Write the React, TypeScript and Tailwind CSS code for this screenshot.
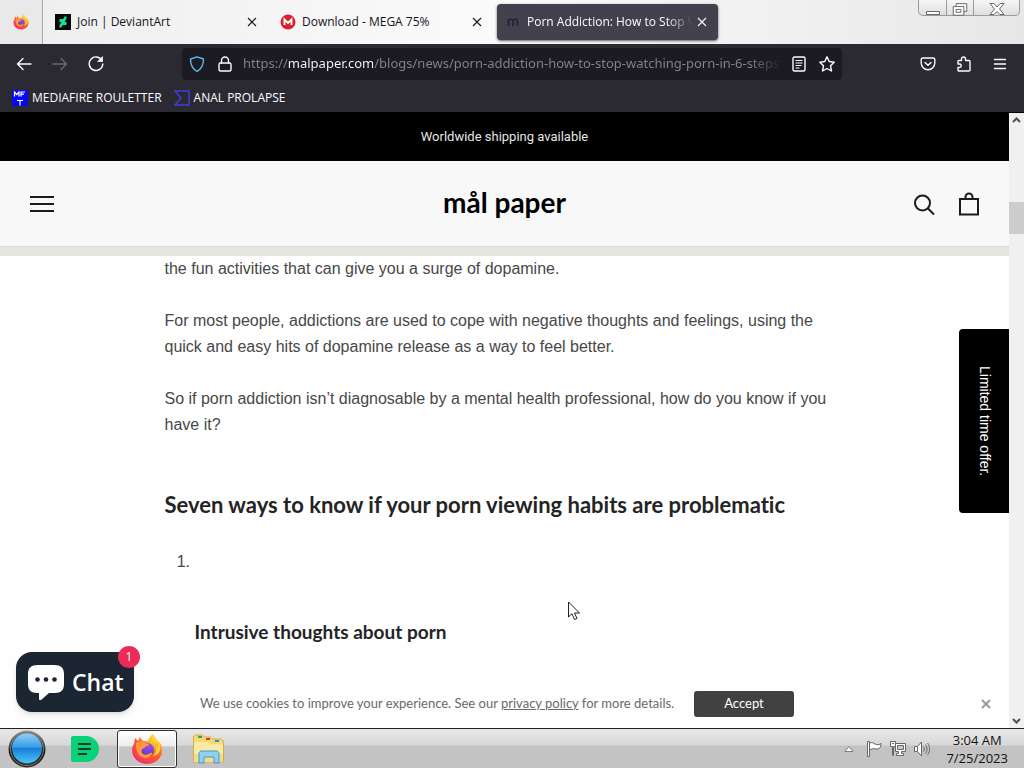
import { useId } from "react";
import type { ReactNode } from "react";

function FirefoxLogo({ className }: { className: string }) {
  const id = useId();
  return (
    <svg viewBox="0 0 32 32" className={className} aria-hidden="true">
      <defs>
        <radialGradient id={`${id}-f`} cx="0.8" cy="0.1" r="1">
          <stop offset="0" stopColor="#fff04a" />
          <stop offset="0.35" stopColor="#ffa11e" />
          <stop offset="0.65" stopColor="#ff5a2b" />
          <stop offset="1" stopColor="#f0306a" />
        </radialGradient>
        <radialGradient id={`${id}-g`} cx="0.6" cy="0.2" r="0.9">
          <stop offset="0" stopColor="#a050ee" />
          <stop offset="1" stopColor="#4a35b8" />
        </radialGradient>
      </defs>
      <path
        fill={`url(#${id}-f)`}
        d="M3 11 4 5l3 3 2-4c1 2 2 3 3.500 4C14 8 16 8 17 8c1-3 2-5 5-7 0 3 2 4 4 7l1 2c0-1 0-2-.5-3C30 10 31.500 14 31 18.500 30.300 26 24 31 16 31S1 25 1 17c0-2.500.8-4.500 2-6Z"
      />
      <circle cx="16" cy="17" r="7" fill={`url(#${id}-g)`} />
      <path fill="#ff9640" d="M5 10c3-2 7-1.500 9 0l4 1c0 1.500-2 2-3.500 2.500-.8.3-1 1.500-1 1.500s-3 .5-3 3 2.500 4 5 3.600c3-.5 4-2.600 6-1.600-1.500 4-6 6-10 4.500C6.500 22.500 5 17 5 10Z" />
      <path fill="#ffd23c" d="M22 1c-1 5 6 7 5.500 14.500C27 14 26 13 25 12.500c1.500 6-1 9-3 10.500 6-1 8-6 7-11-1-4-5-6-7-11Z" />
    </svg>
  );
}

function CloseIcon({ className }: { className: string }) {
  return (
    <svg viewBox="0 0 10 10" className={className} fill="none" stroke="currentColor" strokeWidth="1.100" aria-hidden="true">
      <path d="m1 1 8 8M9 1 1 9" />
    </svg>
  );
}

function LineIcon({ children, className = "size-4" }: { children: ReactNode; className?: string }) {
  return (
    <svg
      viewBox="0 0 16 16"
      className={className}
      fill="none"
      stroke="currentColor"
      strokeWidth="1.400"
      strokeLinecap="round"
      strokeLinejoin="round"
      aria-hidden="true"
    >
      {children}
    </svg>
  );
}

function TabStrip() {
  return (
    <div className="flex h-11 shrink-0 bg-linear-to-r from-[#eeeeee] via-[#fbfbfb] to-[#e6e7e6] text-[12px] text-[#15141a]">
      <button aria-label="Firefox View" className="flex w-[43px] shrink-0 items-center justify-center border-r border-[#aaaaaa] bg-[#e9e9e9]">
        <FirefoxLogo className="size-4" />
      </button>
      <div className="flex w-[225px] shrink-0 items-center pr-1.5 pl-3">
        <svg viewBox="0 0 16 16" className="mr-1.5 size-4" aria-hidden="true">
          <path fill="#07090c" d="M0 0h16v16H0z" />
          <path fill="#12e58b" d="M11.500 2.500v2L9.600 8h1.900v3H8l-.7.500L6.400 13.500H4.500v-2L6.400 8H4.500V5H8l.6-.5.9-2Z" />
        </svg>
        <span className="flex-1">Join | DeviantArt</span>
        <button aria-label="Close Join tab" className="flex size-5 items-center justify-center">
          <CloseIcon className="size-2.5" />
        </button>
      </div>
      <div className="flex w-[225px] shrink-0 items-center pr-1.5 pl-3">
        <svg viewBox="0 0 16 16" className="mr-1.5 size-4" aria-hidden="true">
          <circle cx="8" cy="8" r="7.500" fill="#d9222e" />
          <path d="M4.500 11V5.500L8 9l3.500-3.500V11" fill="none" stroke="#fff" strokeWidth="1.900" />
        </svg>
        <span className="flex-1">Download - MEGA 75%</span>
        <button aria-label="Close Download tab" className="flex size-5 items-center justify-center">
          <CloseIcon className="size-2.5" />
        </button>
      </div>
      <div className="my-1 ml-1 flex w-[221px] shrink-0 items-center rounded-[4px] bg-[#42414d] pr-1.5 pl-2 text-[#fbfbfe] shadow-sm shadow-black/50">
        <svg viewBox="0 0 16 16" className="mr-1.5 size-4 shrink-0" aria-hidden="true">
          <path d="M3.500 12V5m0 2.500C4 5 8 4 8 7.500V12m0-4.500C8.500 4 12.500 4.500 12.500 7.500V12" fill="none" stroke="#24233a" strokeWidth="1.700" />
        </svg>
        <span className="min-w-0 flex-1 overflow-hidden [mask-image:linear-gradient(to_right,black_85%,transparent)] whitespace-nowrap">
          Porn Addiction: How to Stop W
        </span>
        <button aria-label="Close Porn Addiction tab" className="flex size-5 shrink-0 items-center justify-center">
          <CloseIcon className="size-2.5" />
        </button>
      </div>
      <div className="flex flex-1 items-start justify-end">
        <div className="mr-1 flex h-4 rounded-b-[5px] border border-t-0 border-[#9b9b9f] bg-linear-to-b from-[#f6f6f6] to-[#dfdfe2] text-[#66666b]">
          <button aria-label="Minimize" className="flex w-7 justify-center border-r border-[#9b9b9f]">
            <svg viewBox="0 0 27 16" className="h-4 w-[27px]" aria-hidden="true">
              <path fill="#fff" stroke="currentColor" d="M7.500 11.500h13v3h-13z" />
            </svg>
          </button>
          <button aria-label="Restore" className="flex w-[27px] justify-center border-r border-[#9b9b9f]">
            <svg viewBox="0 0 27 16" className="h-4 w-[26px]" aria-hidden="true">
              <path fill="#fff" stroke="currentColor" d="M9.500 3.500h11v8h-11z" />
              <path fill="#fff" stroke="currentColor" d="M6.500 6.500h11v9h-11z" />
              <path fill="none" stroke="currentColor" d="M9.500 9.500h5v3h-5z" />
            </svg>
          </button>
          <button aria-label="Close window" className="flex w-[45px] justify-center">
            <svg viewBox="0 0 16 16" className="size-4" aria-hidden="true">
              <path fill="#fff" stroke="currentColor" strokeLinejoin="round" d="M1 3.500h4L8 7l3-3.500h4L10.500 9l4.500 5.500h-4l-3-3-3 3H1L5.500 9Z" />
            </svg>
          </button>
        </div>
      </div>
    </div>
  );
}

function Toolbar() {
  return (
    <div className="flex h-10 shrink-0 items-center bg-[#2b2a33] text-[#fbfbfe]">
      <div className="flex w-[182px] shrink-0 items-center gap-5 pl-4">
        <button aria-label="Back">
          <LineIcon>
            <path d="M15 8H1.500M7 2.500 1.500 8 7 13.500" />
          </LineIcon>
        </button>
        <button aria-label="Forward" className="text-[#68676f]">
          <LineIcon>
            <path d="M1 8h13.500M9 2.500 14.500 8 9 13.500" />
          </LineIcon>
        </button>
        <button aria-label="Reload">
          <LineIcon>
            <path d="M14 4.500A6.800 6.800 0 1 0 14.800 8" />
            <path d="M14.500 1v4.500H10Z" fill="currentColor" strokeWidth="0.800" />
          </LineIcon>
        </button>
      </div>
      <div className="flex h-8 min-w-0 flex-1 items-center rounded-[4px] bg-[#1c1b22] px-[7px]">
        <button aria-label="Tracking protection" className="mr-3 shrink-0 text-[#5fb8e6]">
          <LineIcon>
            <path d="M8 .8 14.500 3c0 6-2 10-6.500 12.300C3.500 13 1.500 9 1.500 3Z" />
          </LineIcon>
        </button>
        <button aria-label="Site security" className="mr-2.5 shrink-0">
          <LineIcon>
            <rect x="2" y="7" width="12" height="8" rx="1.500" />
            <path d="M4.500 7V4.500a3.500 3.500 0 0 1 7 0V7" />
          </LineIcon>
        </button>
        <input
          aria-label="Address"
          readOnly
          value="https://malpaper.com/blogs/news/porn-addiction-how-to-stop-watching-porn-in-6-steps"
          className="min-w-0 flex-1 bg-[linear-gradient(to_right,#85848c_45px,#fbfbfe_45px,#fbfbfe_130px,#85848c_130px,#85848c_505px,transparent_540px)] bg-clip-text px-0 font-['Noto_Sans','Open_Sans',sans-serif] text-[13px] text-transparent outline-none"
        />
        <button aria-label="Reader view" className="mr-3 ml-2 shrink-0">
          <LineIcon>
            <rect x="2" y="1" width="12" height="14" rx="1.500" />
            <path d="M5 4.500h6M5 7h6M5 9.500h5M5 12h3" strokeWidth="1.200" />
          </LineIcon>
        </button>
        <button aria-label="Bookmark" className="shrink-0">
          <LineIcon>
            <path d="m8 .8 2.200 4.700 5 .7-3.700 3.500 1 5.300L8 12.500 3.500 15l1-5.300L.8 6.200l5-.7Z" />
          </LineIcon>
        </button>
      </div>
      <div className="flex w-[182px] shrink-0 items-center justify-end gap-5 pr-4">
        <button aria-label="Pocket">
          <LineIcon>
            <path d="M2.500 2h11A1.300 1.300 0 0 1 14.800 3.300V7a6.800 6.800 0 0 1-13.600 0V3.300A1.300 1.300 0 0 1 2.500 2Z" />
            <path d="M5 6.500 8 9.300l3-2.800" />
          </LineIcon>
        </button>
        <button aria-label="Extensions">
          <LineIcon>
            <path d="M5.500 4.500V3a2 2 0 0 1 4 0v1.500H13a1 1 0 0 1 1 1V14a1 1 0 0 1-1 1H3a1 1 0 0 1-1-1v-2.500h1.500a1.700 1.700 0 0 0 0-3.500H2V5.500a1 1 0 0 1 1-1Z" />
          </LineIcon>
        </button>
        <button aria-label="Menu">
          <LineIcon>
            <path d="M2.500 3.500h11M2.500 8h11M2.500 12.500h11" />
          </LineIcon>
        </button>
      </div>
    </div>
  );
}

function Bookmarks() {
  return (
    <div className="flex h-[29px] shrink-0 items-center gap-3 border-b border-black bg-[#2b2a33] pl-3 text-[12px] text-[#fbfbfe]">
      <a href="#mediafire" className="flex items-center gap-1">
        <svg viewBox="0 0 16 16" className="size-4" aria-hidden="true">
          <path fill="#0808f2" d="M0 0h16v16H0z" />
          <path fill="none" stroke="#fff" strokeWidth="1.200" d="M2.500 6.500V2l2.200 2.500L7 2v4.500M9 6.500V2h4M9 4.200h3M5 10.500h6M8 10.500v5" />
        </svg>
        MEDIAFIRE ROULETTER
      </a>
      <a href="#prolapse" className="flex items-center gap-1">
        <svg viewBox="0 0 16 16" className="size-4" aria-hidden="true">
          <path fill="none" stroke="#443bd8" strokeWidth="1.500" d="M1 1h14v14H1l6-7Z" />
        </svg>
        ANAL PROLAPSE
      </a>
    </div>
  );
}

function StoreHeader() {
  return (
    <header>
      <p className="flex h-12 items-center justify-center bg-black font-['Roboto',sans-serif] text-[13px] text-[#e4e4e4]">
        Worldwide shipping available
      </p>
      <div className="flex h-[86px] items-center justify-between border-b border-[#d9d9d6] bg-[#f8f8f8] px-[30px] text-[#1c1b1b]">
        <button aria-label="Open navigation" className="w-16">
          <svg viewBox="0 0 24 18" className="h-[18px] w-6" aria-hidden="true">
            <path stroke="currentColor" strokeWidth="2" d="M0 2h24M0 9h24M0 16h24" />
          </svg>
        </button>
        <a href="#home" className="pb-1 font-['Lato',sans-serif] text-[28px] leading-8 font-bold text-black">
          mål paper
        </a>
        <div className="flex w-16 items-center justify-end gap-6">
          <button aria-label="Search">
            <svg viewBox="0 0 22 24" className="h-6 w-[22px]" fill="none" stroke="currentColor" strokeWidth="2" aria-hidden="true">
              <circle cx="9.500" cy="11" r="7.500" />
              <path d="m15 16.500 6 6" />
            </svg>
          </button>
          <button aria-label="Cart">
            <svg viewBox="0 0 20 24" className="h-6 w-5" fill="none" stroke="currentColor" strokeWidth="2" aria-hidden="true">
              <path d="M1 7h18v15.500H1ZM6.500 7V5a3.500 3.500 0 0 1 7 0v2" />
            </svg>
          </button>
        </div>
      </div>
      <div className="h-[9px] bg-[#e5e5de]" />
    </header>
  );
}

function Article() {
  return (
    <article className="mx-auto w-[680px] max-w-full font-['Liberation_Sans',Arial,sans-serif] text-[16px] leading-[26px] text-[#484848]">
      <p className="mb-[26px]">the fun activities that can give you a surge of dopamine.</p>
      <p className="mb-[26px]">
        For most people, addictions are used to cope with negative thoughts and feelings, using the
        <br />
        quick and easy hits of dopamine release as a way to feel better.
      </p>
      <p>
        So if porn addiction isn’t diagnosable by a mental health professional, how do you know if you
        <br />
        have it?
      </p>
      <h2 className="mt-[51px] font-['Lato',sans-serif] text-[22px] leading-8 font-bold text-[#242424] [font-variant-ligatures:none]">
        Seven ways to know if your porn viewing habits are problematic
      </h2>
      <ol className="mt-7 list-decimal pl-[30px]">
        <li>
          <br />
          <h3 className="mt-11 font-['Lato',sans-serif] text-[19px] font-bold text-[#242424]">
            Intrusive thoughts about porn
          </h3>
        </li>
      </ol>
    </article>
  );
}

function PageOverlays() {
  return (
    <>
      <button className="absolute top-[216px] right-0 flex h-[184px] w-[50px] items-center justify-center rounded-l-[4px] bg-black font-['Liberation_Sans',Arial,sans-serif] text-[14px] text-white [writing-mode:vertical-rl]">
        Limited time offer.
      </button>
      <div className="absolute right-0 bottom-0 left-0 flex h-12 items-center pr-[18px] pl-[200px] font-['Lato','Open_Sans',sans-serif] text-[13px] text-[#6a6a6a]">
        <p className="min-w-[482px] whitespace-nowrap [font-variant-ligatures:none]">
          We use cookies to improve your experience. See our{" "}
          <a href="#privacy" className="underline">
            privacy policy
          </a>{" "}
          for more details.
        </p>
        <button className="ml-3 h-[26px] w-[100px] shrink-0 rounded-[3px] bg-[#414141] text-white">Accept</button>
        <button aria-label="Dismiss cookie notice" className="ml-auto text-[#999999]">
          <svg viewBox="0 0 10 10" className="size-2.5" fill="none" stroke="currentColor" strokeWidth="2" aria-hidden="true">
            <path d="m1 1 8 8M9 1 1 9" />
          </svg>
        </button>
      </div>
      <div className="absolute bottom-4 left-4">
        <button className="flex h-[60px] w-[118px] items-center gap-2 rounded-[16px] bg-[#1c2632] pl-3 font-['Open_Sans','Noto_Sans',sans-serif] text-[23px] font-semibold text-white shadow-md">
          <svg viewBox="0 0 36 36" className="size-9" aria-hidden="true">
            <path fill="#fff" d="M10 1h16c7 0 10 3 10 9v10c0 6-3 9-9 9h-6l-8 7c-1 .8-2 0-2-1v-6H9c-6 0-9-3-9-9V10c0-6 3-9 10-9Z" />
            <g fill="#1c2632">
              <circle cx="9.500" cy="15.500" r="2.300" />
              <circle cx="18" cy="15.500" r="2.300" />
              <circle cx="26.500" cy="15.500" r="2.300" />
            </g>
          </svg>
          Chat
        </button>
        <span className="absolute -top-1.5 -right-1.5 flex size-[22px] items-center justify-center rounded-full bg-[#ec2b57] text-[12px] text-white">
          1
        </span>
      </div>
      <svg viewBox="0 0 12 20" className="absolute top-[488px] left-[568px] h-5 w-3" aria-hidden="true">
        <path fill="#fff" stroke="#222" d="M.5 1v15l3.500-3.300 2.500 5.800 2.500-1-2.500-5.500h5Z" />
      </svg>
    </>
  );
}

function ScrollBar() {
  return (
    <div className="flex w-[15px] shrink-0 flex-col items-center bg-[#f0f0f0] text-[#505050]">
      <svg viewBox="0 0 15 15" className="size-[15px]" fill="none" stroke="currentColor" strokeWidth="2" aria-hidden="true">
        <path d="m4 9 3.500-3.500L11 9" />
      </svg>
      <div className="mt-[74px] h-8 w-full bg-[#cdcdcd]" />
      <svg viewBox="0 0 15 15" className="mt-auto size-[15px]" fill="none" stroke="currentColor" strokeWidth="2" aria-hidden="true">
        <path d="M4 6 7.500 9.500 11 6" />
      </svg>
    </div>
  );
}

function Taskbar() {
  return (
    <footer className="flex h-10 shrink-0 items-center border-t border-[#202020] bg-linear-to-b from-[#e8e8e8] from-0% via-[#d8d8d8] via-40% to-[#c3c3c3] to-45%">
      <button aria-label="Start" className="flex w-[53px] justify-center">
        <svg viewBox="0 0 40 38" className="h-[38px] w-10" aria-hidden="true">
          <defs>
            <linearGradient id="orb" x1="0" y1="0" x2="0" y2="1">
              <stop offset="0" stopColor="#8fd0f5" />
              <stop offset="0.45" stopColor="#389de8" />
              <stop offset="0.5" stopColor="#197fd6" />
              <stop offset="1" stopColor="#48c6fa" />
            </linearGradient>
            <linearGradient id="rim" x1="0" y1="0" x2="0" y2="1">
              <stop offset="0" stopColor="#9a9a9a" />
              <stop offset="0.6" stopColor="#161616" />
              <stop offset="1" stopColor="#303030" />
            </linearGradient>
          </defs>
          <circle cx="20" cy="19" r="18.500" fill="url(#rim)" />
          <circle cx="20" cy="19" r="16.500" fill="none" stroke="#777" />
          <circle cx="20" cy="18.500" r="15" fill="url(#orb)" />
        </svg>
      </button>
      <button aria-label="Notes" className="flex w-[64px] justify-center">
        <svg viewBox="0 0 30 28" className="h-7 w-[30px]" aria-hidden="true">
          <path fill="#08d178" d="M3 1h13a13 13 0 0 1 0 26H3c-1.500 0-2-1-2-2V3c0-1 .5-2 2-2Z" />
          <path stroke="#123c2a" strokeWidth="2" d="M8 9h13M8 14h13M8 19h9" />
        </svg>
      </button>
      <button
        aria-label="Firefox"
        className="flex h-[38px] w-[60px] items-center justify-center rounded-[3px] border border-[#303030] bg-linear-to-b from-white from-0% via-[#eeeeee] via-40% to-[#c5c5c5] to-45% shadow-[inset_0_0_0_1px_#ffffff]"
      >
        <FirefoxLogo className="size-8" />
      </button>
      <button aria-label="Windows Explorer" className="flex w-16 justify-center">
        <svg viewBox="0 0 34 30" className="h-[30px] w-[34px]" aria-hidden="true">
          <path fill="#f6d974" stroke="#d4ad45" d="M1.500 5V2.500l2-1.500h7l2 2h6l2 2h8l3 2v21h-30Z" />
          <path fill="#33a852" d="M6 2h4v2H6z" />
          <path fill="#cf3b31" d="M14 4h4v2h-4z" />
          <path fill="#3b89d0" d="M23 6h4v2h-4z" />
          <path fill="#fbeaa4" d="M2 8h14l3 2h12v18H2Z" />
          <path fill="#f3dc8c" d="M2 20h29v8H2z" />
          <path fill="#8dd2f0" stroke="#4596c4" d="M7 29V20c0-2 1-3 3-3h14c2 0 3 1 3 3v9h-5v-6H12v6Z" />
        </svg>
      </button>
      <div className="ml-auto flex items-center text-[#666666]">
        <button aria-label="Show hidden icons" className="mr-3">
          <svg viewBox="0 0 10 6" className="h-1.5 w-2.5" aria-hidden="true">
            <path fill="#fff" stroke="currentColor" strokeWidth="0.800" d="m1 5.500 4-5 4 5Z" />
          </svg>
        </button>
        <button aria-label="Action center" className="mr-2">
          <svg viewBox="0 0 16 16" className="size-4" aria-hidden="true">
            <path fill="#fff" stroke="currentColor" d="M1.500.5h2v15h-2ZM3.500 2c3-1 4 0 5.500 1 2 1 4 1 6-.500 0 4-2 6-5 5.500-2-.5-4-.5-6.500 1Z" />
          </svg>
        </button>
        <button aria-label="Network" className="mr-2">
          <svg viewBox="0 0 16 16" className="size-4" aria-hidden="true">
            <path fill="#fff" stroke="currentColor" d="M5.500 2.500h10v8h-4v2h2v2h-7v-2h2v-2h-3Z" />
            <path fill="#ccc" stroke="currentColor" d="M7.500 4.500h6v4h-6z" />
            <path fill="#fff" stroke="currentColor" d="M.5.5h5v5h-2v9h-1v-9h-2ZM2 2.500h2" />
          </svg>
        </button>
        <button aria-label="Volume" className="mr-4">
          <svg viewBox="0 0 16 16" className="size-4" fill="none" stroke="currentColor" aria-hidden="true">
            <path fill="#fff" d="M.5 5.500h3l4-4.500v14l-4-4.500h-3ZM3.500 5.500v5" />
            <path d="M9.500 5.500c1 1.500 1 3.500 0 5M11.500 3.500c2 3 2 6 0 9M13.500 2c3 4 3 8 0 12" />
          </svg>
        </button>
        <p className="mr-4 text-center text-[13px] leading-[18px] text-[#111111]">
          3:04 AM
          <br />
          7/25/2023
        </p>
      </div>
    </footer>
  );
}

export default function App() {
  return (
    <div className="flex h-screen flex-col overflow-hidden bg-white font-['Open_Sans','Noto_Sans',sans-serif]">
      <TabStrip />
      <Toolbar />
      <Bookmarks />
      <div className="flex min-h-0 flex-1">
        <main className="relative min-w-0 flex-1 overflow-hidden bg-[#fefefe]">
          <StoreHeader />
          <Article />
          <PageOverlays />
        </main>
        <ScrollBar />
      </div>
      <Taskbar />
    </div>
  );
}
